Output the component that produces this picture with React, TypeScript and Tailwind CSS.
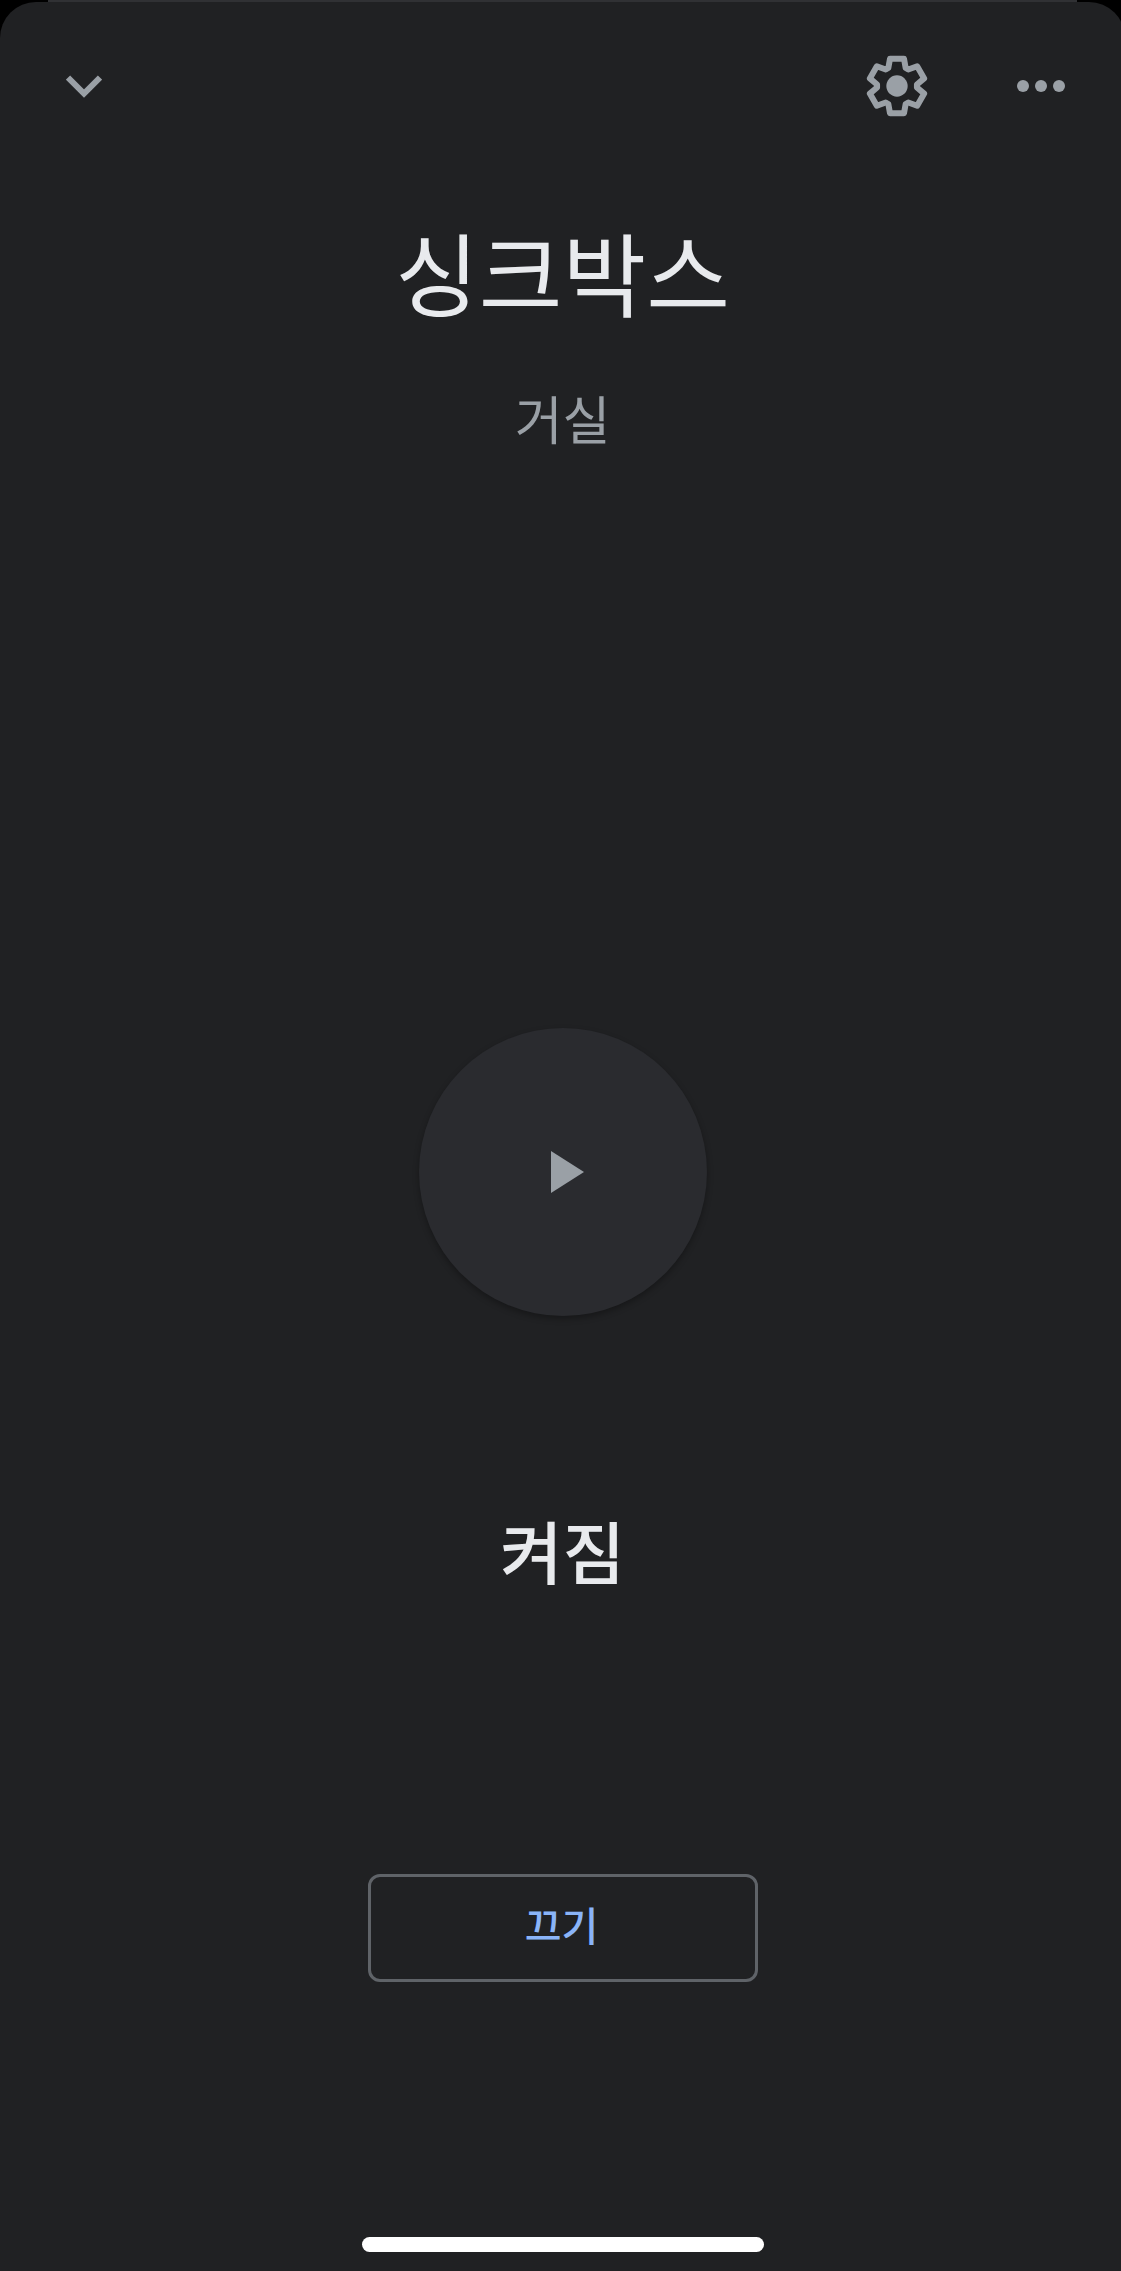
import React from 'react';

interface IconButtonProps {
  label: string;
  className?: string;
  children: React.ReactNode;
}

const IconButton: React.FC<IconButtonProps> = ({ label, className = '', children }) => {
  return (
    <button
      type="button"
      aria-label={label}
      className={`flex h-24 w-24 items-center justify-center text-[#9aa0a6] ${className}`}
    >
      {children}
    </button>
  );
};

const ChevronDownIcon: React.FC = () => (
  <svg className="h-6 w-9" viewBox="0 0 36 24" fill="none" stroke="currentColor" strokeWidth="6">
    <path d="M2 3.5 18 19.5 34 3.5" />
  </svg>
);

const GearIcon: React.FC = () => (
  <svg className="h-[62px] w-[62px]" viewBox="-93 -93 186 186">
    <path
      d="M-21-82H21L26-54 33.8-49.5 60.5-59.2 81.5-22.8 59.8-4.5V4.5L81.5 22.8 60.5 59.2 33.8 49.5 26 54 21 82H-21L-26 54-33.8 49.5-60.5 59.2-81.5 22.8-59.8 4.5V-4.5L-81.5-22.8-60.5-59.2-33.8-49.5-26-54Z"
      fill="none"
      stroke="currentColor"
      strokeWidth="18"
      strokeLinejoin="round"
    />
    <circle r="32" fill="currentColor" />
  </svg>
);

const MoreIcon: React.FC = () => (
  <svg className="h-3 w-12" viewBox="0 0 48 12" fill="currentColor">
    <circle cx="6" cy="6" r="6" />
    <circle cx="24" cy="6" r="6" />
    <circle cx="42" cy="6" r="6" />
  </svg>
);

const PlayIcon: React.FC = () => (
  <svg className="ml-2.5 h-[42px] w-[33px]" viewBox="0 0 33 42" fill="currentColor">
    <path d="M0 0 33 21 0 42Z" />
  </svg>
);

const Header: React.FC = () => {
  return (
    <header className="flex h-[168px] items-center justify-between px-9">
      <IconButton label="닫기">
        <ChevronDownIcon />
      </IconButton>
      <div className="flex gap-12">
        <IconButton label="설정">
          <GearIcon />
        </IconButton>
        <IconButton label="더보기">
          <MoreIcon />
        </IconButton>
      </div>
    </header>
  );
};

const App: React.FC = () => {
  return (
    <div className="flex min-h-screen flex-col overflow-hidden bg-black font-['Noto_Sans_CJK_KR',sans-serif]">
      {/* edge of the sheet behind */}
      <div className="mr-11 ml-12 h-[2px] bg-[#303134]" />

      <div className="-mr-1 flex flex-1 flex-col items-stretch rounded-t-[36px] bg-[#202123] text-center">
        <Header />

        <main className="flex flex-col items-center">
          <h1 className="mt-11 text-[91px] leading-[112px] text-[#e8eaed]">싱크박스</h1>
          <p className="mt-14 text-[52px] leading-[72px] text-[#9aa0a6]">거실</p>

          <button
            type="button"
            aria-label="재생"
            className="mt-[574px] flex h-72 w-72 items-center justify-center rounded-full bg-[#2a2b2f] text-[#9aa0a6] shadow-[0_3px_6px_rgba(0,0,0,0.3)]"
          >
            <PlayIcon />
          </button>

          <p className="mt-[186px] text-[68px] leading-[96px] font-medium text-[#e8eaed]">켜짐</p>

          <button
            type="button"
            className="mt-[276px] h-[108px] w-[390px] rounded-xl border-3 border-[#5f6368] pr-0.5 pb-2 text-[40px] font-medium text-[#8ab4f8]"
          >
            끄기
          </button>
        </main>

        <div className="mx-auto mt-auto mb-[19px] h-[15px] w-[402px] rounded-full bg-white" />
      </div>
    </div>
  );
};

export default App;
